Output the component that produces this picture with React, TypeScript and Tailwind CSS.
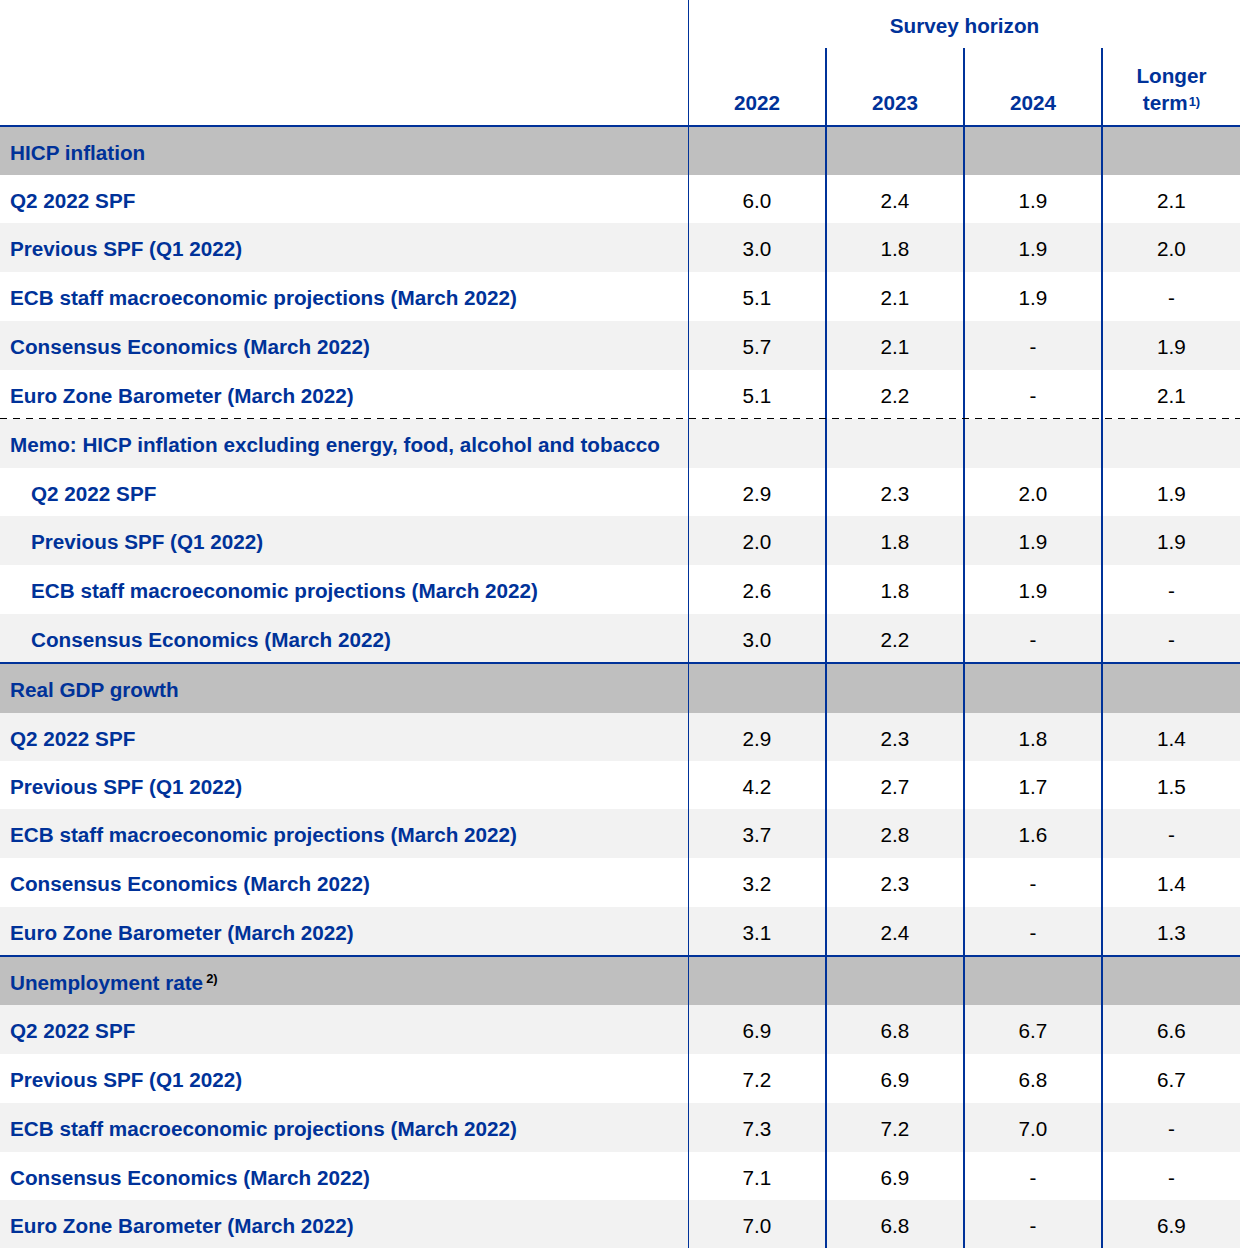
import React from "react";

type Row = {
  label: string;
  kind: "section" | "data" | "memo";
  indent?: boolean;
  values?: string[];
  bg: "gray" | "white" | "light";
  h: number;
  sup?: string;
  topBorder?: boolean;
  dashedBottom?: boolean;
};

const rows: Row[] = [
  { label: "HICP inflation", kind: "section", bg: "gray", h: 48 },
  { label: "Q2 2022 SPF", kind: "data", values: ["6.0", "2.4", "1.9", "2.1"], bg: "white", h: 48 },
  { label: "Previous SPF (Q1 2022)", kind: "data", values: ["3.0", "1.8", "1.9", "2.0"], bg: "light", h: 49 },
  { label: "ECB staff macroeconomic projections (March 2022)", kind: "data", values: ["5.1", "2.1", "1.9", "-"], bg: "white", h: 49 },
  { label: "Consensus Economics (March 2022)", kind: "data", values: ["5.7", "2.1", "-", "1.9"], bg: "light", h: 49 },
  { label: "Euro Zone Barometer (March 2022)", kind: "data", values: ["5.1", "2.2", "-", "2.1"], bg: "white", h: 49, dashedBottom: true },
  { label: "Memo: HICP inflation excluding energy, food, alcohol and tobacco", kind: "memo", bg: "light", h: 49 },
  { label: "Q2 2022 SPF", kind: "data", indent: true, values: ["2.9", "2.3", "2.0", "1.9"], bg: "white", h: 48 },
  { label: "Previous SPF (Q1 2022)", kind: "data", indent: true, values: ["2.0", "1.8", "1.9", "1.9"], bg: "light", h: 49 },
  { label: "ECB staff macroeconomic projections (March 2022)", kind: "data", indent: true, values: ["2.6", "1.8", "1.9", "-"], bg: "white", h: 49 },
  { label: "Consensus Economics (March 2022)", kind: "data", indent: true, values: ["3.0", "2.2", "-", "-"], bg: "light", h: 48 },
  { label: "Real GDP growth", kind: "section", bg: "gray", h: 51, topBorder: true },
  { label: "Q2 2022 SPF", kind: "data", values: ["2.9", "2.3", "1.8", "1.4"], bg: "light", h: 48 },
  { label: "Previous SPF (Q1 2022)", kind: "data", values: ["4.2", "2.7", "1.7", "1.5"], bg: "white", h: 48 },
  { label: "ECB staff macroeconomic projections (March 2022)", kind: "data", values: ["3.7", "2.8", "1.6", "-"], bg: "light", h: 49 },
  { label: "Consensus Economics (March 2022)", kind: "data", values: ["3.2", "2.3", "-", "1.4"], bg: "white", h: 49 },
  { label: "Euro Zone Barometer (March 2022)", kind: "data", values: ["3.1", "2.4", "-", "1.3"], bg: "light", h: 48 },
  { label: "Unemployment rate", kind: "section", bg: "gray", h: 50, topBorder: true, sup: "2)" },
  { label: "Q2 2022 SPF", kind: "data", values: ["6.9", "6.8", "6.7", "6.6"], bg: "light", h: 49 },
  { label: "Previous SPF (Q1 2022)", kind: "data", values: ["7.2", "6.9", "6.8", "6.7"], bg: "white", h: 49 },
  { label: "ECB staff macroeconomic projections (March 2022)", kind: "data", values: ["7.3", "7.2", "7.0", "-"], bg: "light", h: 49 },
  { label: "Consensus Economics (March 2022)", kind: "data", values: ["7.1", "6.9", "-", "-"], bg: "white", h: 48 },
  { label: "Euro Zone Barometer (March 2022)", kind: "data", values: ["7.0", "6.8", "-", "6.9"], bg: "light", h: 48 },
];

const bgClass = {
  gray: "bg-[#bfbfbf]",
  white: "bg-white",
  light: "bg-[#f2f2f2]",
};

const years = ["2022", "2023", "2024"];

const App: React.FC = () => {
  return (
    <div
      className="w-[1240px] h-[1256px] bg-white text-[20.7px] text-[#003299]"
      style={{ fontFamily: '"Liberation Sans", Arial, sans-serif' }}
    >
      {/* Header */}
      <div className="flex h-[48px]">
        <div className="w-[689px] border-r border-[#003299]" />
        <div className="flex-1 flex items-center justify-center pt-[3px] font-bold">Survey horizon</div>
      </div>
      <div className="flex h-[79px] border-b-2 border-[#003299]">
        <div className="w-[689px] border-r border-[#003299]" />
        {years.map((y) => (
          <div
            key={y}
            className="w-[138px] border-r-2 border-[#003299] flex items-end justify-center pb-[9px] font-bold leading-[27px]"
          >
            {y}
          </div>
        ))}
        <div className="flex-1 flex flex-col items-center justify-end pb-[9px] font-bold leading-[27px]">
          <span>Longer</span>
          <span>
            term<sup className="text-[13px] relative -top-[4px] ml-[1px]">1)</sup>
          </span>
        </div>
      </div>

      {/* Body */}
      {rows.map((r, i) => (
        <div
          key={i}
          className={`flex ${bgClass[r.bg]} ${r.topBorder ? "border-t-2 border-[#003299]" : ""} relative`}
          style={{ height: r.h }}
        >
          <div
            className={`w-[689px] border-r border-[#003299] flex items-center pt-[3px] font-bold whitespace-nowrap ${
              r.indent ? "pl-[31px]" : "pl-[10px]"
            }`}
          >
            {r.label}
            {r.sup && <sup className="text-[13px] text-black ml-[3px] relative -top-[4px]">{r.sup}</sup>}
          </div>
          {[0, 1, 2, 3].map((c) => (
            <div
              key={c}
              className={`flex items-center justify-center pt-[3px] text-black ${
                c < 3 ? "w-[138px] border-r-2 border-[#003299]" : "flex-1"
              }`}
            >
              {r.values ? r.values[c] : ""}
            </div>
          ))}
          {r.dashedBottom && (
            <div className="absolute left-0 right-0 -bottom-[1px] h-[2px] bg-[repeating-linear-gradient(90deg,#000_0px,#000_7px,transparent_7px,transparent_13px)]" />
          )}
        </div>
      ))}
    </div>
  );
};

export default App;
